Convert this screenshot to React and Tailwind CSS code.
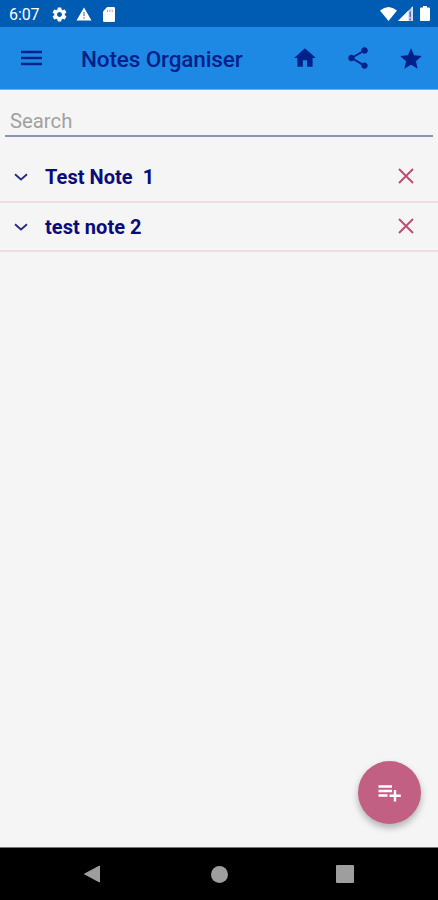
import React from "react";

function Icon({ d, className }) {
  return (
    <svg viewBox="0 0 24 24" fill="currentColor" className={className}>
      <path fillRule="evenodd" d={d} />
    </svg>
  );
}

const GEAR =
  "M19.43 12.98c.04-.32.07-.64.07-.98s-.03-.66-.07-.98l2.11-1.65c.19-.15.24-.42.12-.64l-2-3.46c-.12-.22-.39-.3-.61-.22l-2.49 1c-.52-.4-1.08-.73-1.69-.98l-.38-2.65C14.46 2.18 14.25 2 14 2h-4c-.25 0-.46.18-.49.42l-.38 2.65c-.61.25-1.17.59-1.69.98l-2.49-1c-.23-.09-.49 0-.61.22l-2 3.46c-.13.22-.07.49.12.64l2.11 1.65c-.04.32-.07.65-.07.98s.03.66.07.98l-2.11 1.65c-.19.15-.24.42-.12.64l2 3.46c.12.22.39.3.61.22l2.49-1c.52.4 1.08.73 1.69.98l.38 2.65c.03.24.24.42.49.42h4c.25 0 .46-.18.49-.42l.38-2.65c.61-.25 1.17-.59 1.69-.98l2.49 1c.23.09.49 0 .61-.22l2-3.46c.12-.22.07-.49-.12-.64l-2.11-1.65zM12 15.5c-1.93 0-3.5-1.57-3.5-3.5s1.57-3.5 3.5-3.5 3.5 1.57 3.5 3.5-1.57 3.5-3.5 3.5z";
const HOME = "M10 20v-6h4v6h5v-8h3L12 3 2 12h3v8z";
const SHARE =
  "M18 16.08c-.76 0-1.44.3-1.96.77L8.91 12.7c.05-.23.09-.46.09-.7s-.04-.47-.09-.7l7.05-4.11c.54.5 1.25.81 2.04.81 1.66 0 3-1.34 3-3s-1.34-3-3-3-3 1.34-3 3c0 .24.04.47.09.7L8.04 9.81C7.5 9.31 6.79 9 6 9c-1.66 0-3 1.34-3 3s1.34 3 3 3c.79 0 1.5-.31 2.04-.81l7.12 4.16c-.05.21-.08.43-.08.65 0 1.61 1.31 2.92 2.92 2.92s2.92-1.31 2.92-2.92-1.31-2.92-2.92-2.92z";
const STAR =
  "M12 17.27L18.18 21l-1.64-7.03L22 9.24l-7.19-.61L12 2 9.19 8.63 2 9.24l5.46 4.73L5.82 21z";

function StatusBar() {
  return (
    <div className="flex h-[27px] items-center bg-[#005cb2] pr-2 pl-[9px] text-white">
      <span className="w-[42px] pt-[2px] text-[16px] leading-none tracking-[-0.1px]">6:07</span>
      <Icon d={GEAR} className="mt-[1px] h-[17px] w-[17px]" />
      <svg viewBox="0 0 16 14" className="mt-[1px] ml-[8px] h-[14px] w-4">
        <path d="M8 0.5L15.5 13.5H0.5Z" fill="#fff" />
        <path d="M8 5v4M8 10.2v1.6" stroke="#6d7fc0" strokeWidth="1.3" />
      </svg>
      <svg viewBox="0 0 12 15" className="mt-[1px] ml-[11px] h-[15px] w-3">
        <path
          fillRule="evenodd"
          fill="#fff"
          d="M4.2 0H10.8Q12 0 12 1.2V13.8Q12 15 10.8 15H1.2Q0 15 0 13.8V4.4Z"
        />
        <path d="M4.6 2.6V5M6.9 2.6V5M9.2 2.6V5" stroke="#8fa5d6" strokeWidth="1" />
      </svg>
      <svg viewBox="0 0 17 14" className="mt-[1px] ml-auto h-[14px] w-[17px]">
        <path d="M0 3.6Q8.5 -3.4 17 3.6L8.5 14Z" fill="#fff" />
      </svg>
      <svg viewBox="0 0 15 15" className="ml-[1px] h-[15px] w-[15px]">
        <path d="M0 15L15 0V15Z" fill="#b4c8ee" />
        <path d="M0 15L10.5 4.5V15Z" fill="#fff" />
        <path d="M12.2 5.5V11M12.2 12.5V14.2" stroke="#3c66b8" strokeWidth="1.3" />
        <path d="M14.2 1V15" stroke="#dce8fa" strokeWidth="1.2" />
      </svg>
      <svg viewBox="0 0 10 15" className="ml-[7px] h-[15px] w-[10px]">
        <path
          d="M3 0H7V1.5H9Q10 1.5 10 2.5V14Q10 15 9 15H1Q0 15 0 14V2.5Q0 1.5 1 1.5H3Z"
          fill="#fff"
        />
      </svg>
    </div>
  );
}

function AppBar() {
  return (
    <header className="flex h-[63px] items-center border-b border-[#78aee3] bg-[#1e88e5] pr-[14px] pl-[21px] text-[#00208a]">
      <svg viewBox="0 0 21 16" className="h-4 w-[21px]">
        <path d="M0 2H21M0 8H21M0 14H21" stroke="currentColor" strokeWidth="2.3" />
      </svg>
      <h1 className="ml-[39px] pt-[3px] text-[22.5px] leading-none font-medium tracking-[-0.13px] whitespace-nowrap">
        Notes Organiser
      </h1>
      <div className="ml-auto flex items-center gap-[27px]">
        <Icon d={HOME} className="h-[26px] w-[26px]" />
        <Icon d={SHARE} className="h-[26px] w-[26px]" />
        <Icon d={STAR} className="mt-[1px] h-[26px] w-[26px]" />
      </div>
    </header>
  );
}

function NoteRow({ title }) {
  return (
    <li className="flex h-[49px] items-center border-b-2 border-[#f0dde1] pr-6 pl-[14px] first:h-[50px]">
      <svg viewBox="0 0 14 8" className="h-2 w-[14px]">
        <path d="M1 1.3L7 6.5L13 1.3" fill="none" stroke="#29297f" strokeWidth="1.8" />
      </svg>
      <span className="ml-[17px] text-[20px] leading-none font-bold tracking-[0.05px] whitespace-pre text-[#090c7a]">
        {title}
      </span>
      <svg viewBox="0 0 16 16" className="mb-[2px] ml-auto h-4 w-4">
        <path d="M1 1L15 15M15 1L1 15" stroke="#bd4c72" strokeWidth="1.9" />
      </svg>
    </li>
  );
}

function NavigationBar() {
  return (
    <nav className="flex h-[53px] items-center border-t border-[#777] bg-black pl-[83px] text-[#9e9e9e]">
      <svg viewBox="0 0 17 18" className="h-[18px] w-[18px]">
        <path
          d="M1 9L16 1V17Z"
          fill="currentColor"
          stroke="currentColor"
          strokeLinejoin="round"
        />
      </svg>
      <div className="ml-[110px] h-[17px] w-[17px] rounded-full bg-[#9e9e9e]" />
      <div className="ml-[108px] h-[18px] w-[18px] rounded-[1px] bg-[#9e9e9e]" />
    </nav>
  );
}

export default function App() {
  return (
    <div className="relative flex h-[900px] w-full flex-col overflow-hidden bg-[#f5f5f5] font-['Roboto',sans-serif]">
      <StatusBar />
      <AppBar />
      <main className="flex-1">
        <div className="mx-[5px] h-[47px] border-b-2 border-[#8f93ba] pt-[19px] pl-[5px]">
          <input
            aria-label="Search"
            placeholder="Search"
            className="block h-6 w-full bg-transparent text-[20.3px] leading-none outline-none placeholder:text-[#a0a0a0]"
          />
        </div>
        <ul className="mt-4">
          <NoteRow title="Test Note  1" />
          <NoteRow title="test note 2" />
        </ul>
      </main>
      <button
        aria-label="Add note"
        className="absolute top-[761px] left-[358px] flex h-[63px] w-[63px] items-center justify-center rounded-full bg-[#c26084] text-white shadow-[0_4px_7px_rgba(0,0,0,0.28)]"
      >
        <svg viewBox="0 0 24 18" className="mt-[1px] h-[18px] w-6">
          <path d="M0.5 2.5H14M0.5 7H14M0.5 11.5H9.5" stroke="currentColor" strokeWidth="2.4" />
          <path d="M17 6V17.5M11.5 11.7H22.8" stroke="currentColor" strokeWidth="2.4" />
        </svg>
      </button>
      <NavigationBar />
    </div>
  );
}
